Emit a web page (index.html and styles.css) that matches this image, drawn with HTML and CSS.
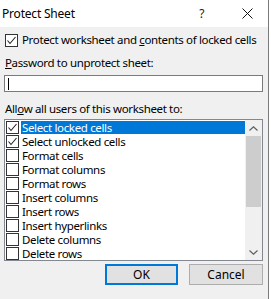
FILE: index.html
```html
<!DOCTYPE html>
<html lang="en">
<head>
  <meta charset="UTF-8">
  <title>Protect Sheet</title>
  <link rel="stylesheet" href="styles.css">
</head>
<body>
  <div class="dialog">
    <div class="titlebar">
      <span class="title">Protect Sheet</span>
      <span class="help">?</span>
      <svg class="close" width="11" height="11" viewBox="0 0 11 11"><path d="M0.5 0.5 L10.5 10.5 M10.5 0.5 L0.5 10.5" stroke="#111" stroke-width="1" fill="none"/></svg>
    </div>

    <div class="content">
      <label class="check-row main">
        <span class="box"><svg width="11" height="11" viewBox="0 0 11 11"><path d="M1.5 5.5 L4 8.5 L9.5 2" stroke="#222" stroke-width="1.1" fill="none"/></svg></span>
        <span>Protect worksheet and <u>c</u>ontents of locked cells</span>
      </label>

      <div class="field-label"><u>P</u>assword to unprotect sheet:</div>
      <div class="input"><span class="caret"></span></div>

      <div class="field-label allow">All<u>o</u>w all users of this worksheet to:</div>

      <div class="list">
        <div class="items" id="items"></div>
        <div class="scrollbar">
          <div class="arrow"><svg width="9" height="5" viewBox="0 0 9 5"><path d="M0.5 4.5 L4.5 0.8 L8.5 4.5" stroke="#606060" stroke-width="1.2" fill="none"/></svg></div>
          <div class="thumb"></div>
          <div class="track"></div>
          <div class="arrow"><svg width="9" height="5" viewBox="0 0 9 5"><path d="M0.5 0.5 L4.5 4.2 L8.5 0.5" stroke="#606060" stroke-width="1.2" fill="none"/></svg></div>
        </div>
      </div>

      <div class="buttons">
        <button class="btn default">OK</button>
        <button class="btn">Cancel</button>
      </div>
    </div>
  </div>

  <script>
    const items = [
      ['Select locked cells', true],
      ['Select unlocked cells', true],
      ['Format cells', false],
      ['Format columns', false],
      ['Format rows', false],
      ['Insert columns', false],
      ['Insert rows', false],
      ['Insert hyperlinks', false],
      ['Delete columns', false],
      ['Delete rows', false]
    ];
    const tick = '<svg width="11" height="11" viewBox="0 0 11 11"><path d="M1.5 5.5 L4 8.5 L9.5 2" stroke="#222" stroke-width="1.1" fill="none"/></svg>';
    const list = document.getElementById('items');
    items.forEach(([name, on], i) => {
      const row = document.createElement('div');
      row.className = 'item';
      row.innerHTML = '<span class="box">' + (on ? tick : '') + '</span>' +
        '<span class="item-text' + (i === 0 ? ' selected' : '') + '">' + name + '</span>';
      list.appendChild(row);
    });
  </script>
</body>
</html>
```

FILE: styles.css
```css
body {
  margin: 0;
  background: #fff;
  font-family: 'Noto Sans', sans-serif;
  font-size: 11.5px;
  letter-spacing: -0.35px;
  color: #000;
}
.dialog {
  width: 268px;
  height: 299px;
  background: #f0f0f0;
  border-right: 1px solid #7a7a7a;
  overflow: hidden;
}
.titlebar {
  height: 27px;
  background: #fff;
  display: flex;
  align-items: center;
}
.title {
  flex: 1;
  padding-left: 2px;
  margin-top: -1px;
  font-size: 12px;
  letter-spacing: -0.2px;
}
.help {
  margin-right: 38px;
  margin-top: -1px;
  color: #222;
  font-size: 12px;
}
.close {
  margin-right: 15px;
  margin-top: -1px;
}
.content {
  padding: 0 5px 0 4px;
}
.check-row {
  display: flex;
  align-items: center;
  gap: 4px;
  height: 14px;
  line-height: 14px;
}
.check-row.main {
  margin-top: 6px;
  padding-left: 1px;
  white-space: nowrap;
}
.box {
  width: 11px;
  height: 11px;
  border: 1px solid #333;
  background: #fff;
  flex: none;
  display: flex;
}
.field-label {
  margin-top: 9px;
  padding-left: 1px;
  line-height: 14px;
}
.input {
  margin-top: 5px;
  height: 15px;
  border: 1px solid #7a7a7a;
  background: #fff;
  display: flex;
  align-items: center;
}
.caret {
  width: 1px;
  height: 12px;
  background: #000;
  margin-left: 3px;
}
.field-label.allow {
  margin-top: 10px;
}
.list {
  margin-top: 3px;
  height: 140px;
  border: 1px solid #828790;
  background: #fff;
  display: flex;
  overflow: hidden;
}
.items {
  flex: 1;
  padding-left: 1px;
}
.item {
  display: flex;
  align-items: center;
  height: 14px;
  line-height: 13px;
  gap: 2px;
}
.item-text {
  height: 13px;
  padding: 0 2px 0 1px;
  white-space: nowrap;
}
.item-text.selected {
  flex: 1;
  background: #0078d7;
  color: #fff;
}
.scrollbar {
  width: 17px;
  background: #f0f0f0;
  display: flex;
  flex-direction: column;
}
.arrow {
  height: 16px;
  display: flex;
  align-items: center;
  justify-content: center;
}
.thumb {
  height: 71px;
  margin: 0 1px;
  background: #cdcdcd;
}
.track {
  flex: 1;
}
.buttons {
  display: flex;
  justify-content: flex-end;
  gap: 11px;
  margin-top: 3px;
}
.btn {
  font-family: 'Noto Sans', sans-serif;
  font-size: 12px;
  width: 74px;
  height: 21px;
  padding: 0;
  background: #e1e1e1;
  border: 1px solid #adadad;
  color: #000;
}
.btn.default {
  width: 73px;
  border: 2px solid #0078d7;
}
```
